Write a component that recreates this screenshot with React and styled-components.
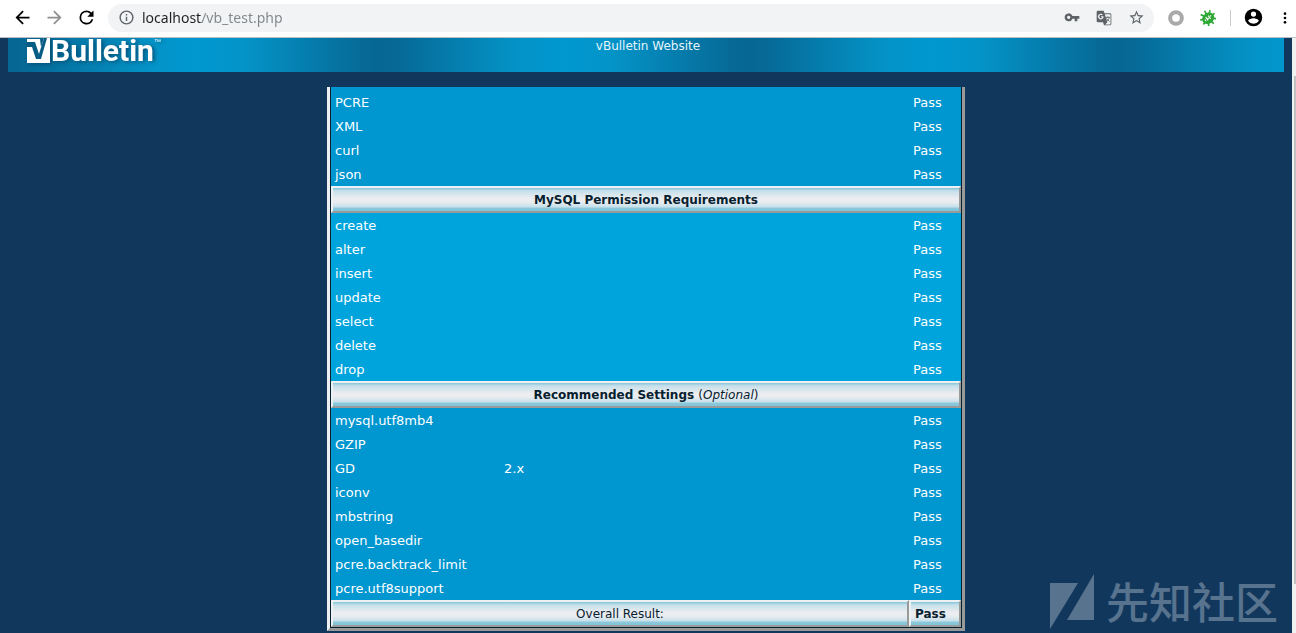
import React from "react";
import styled, { createGlobalStyle } from "styled-components";

const GlobalStyle = createGlobalStyle`
  *, *::before, *::after { box-sizing: border-box; }
  html, body { margin: 0; padding: 0; }
  body {
    background: #12375d;
    font-family: "DejaVu Sans", sans-serif;
    color: #fff;
  }
  button { font: inherit; color: inherit; }
`;

const Window = styled.div`
  min-height: 100vh;
  display: flex;
  flex-direction: column;
`;

const Toolbar = styled.header`
  height: 38px;
  flex: none;
  display: flex;
  align-items: center;
  padding: 0 3px 2px 6px;
  background: #fff;
  border-bottom: 1px solid #b9bfc4;
  color: #000;
`;

const IconButton = styled.button`
  width: 32px;
  height: 28px;
  flex: none;
  display: flex;
  align-items: center;
  justify-content: center;
  padding: 0;
  border: 0;
  background: none;
  color: ${(p) => p.$color || "#5f6368"};
`;

const MenuButton = styled(IconButton)`
  width: 16px;
  margin-left: 8px;
`;

const Omnibox = styled.form`
  flex: 1;
  min-width: 0;
  height: 28px;
  display: flex;
  align-items: center;
  margin: 0 6px;
  padding: 0 2px;
  border-radius: 14px;
  background: #f1f3f4;
`;

const UrlInput = styled.input`
  flex: 1;
  min-width: 0;
  height: 28px;
  padding: 0;
  border: 0;
  outline: 0;
  font: 14px/20px "Noto Sans", sans-serif;
  color: transparent;
  background: linear-gradient(90deg, #202124 60px, #80868b 60px);
  background-clip: text;
  -webkit-background-clip: text;
`;

const Divider = styled.span`
  width: 1px;
  height: 16px;
  margin: 0 6px;
  background: #c8cacc;
`;

const Viewport = styled.div`
  flex: 1;
  display: flex;
`;

const Page = styled.main`
  position: relative;
  flex: 1;
  min-width: 0;
  padding: 0 8px;
`;

const Banner = styled.div`
  height: 34px;
  display: grid;
  grid-template-columns: 1fr auto 1fr;
  padding: 0 12px 0 16px;
  overflow: hidden;
  background: repeating-linear-gradient(
    90deg,
    #066794 5px,
    #066996 20px,
    #0494c8 144px,
    #0098d0 189px,
    #0494c8 234px,
    #066996 358px,
    #066794 373px
  );
`;

const BannerLink = styled.a`
  color: #e6f5fb;
  font-size: 12px;
  line-height: 16px;
  text-decoration: none;
`;

const Logo = styled.a`
  display: flex;
  align-items: flex-end;
  height: 34px;
  padding: 0 0 9px 3px;
  color: #fff;
  text-decoration: none;
  filter: drop-shadow(2px 1px 2px #044d73);
`;

const LogoText = styled.span`
  margin-left: 1px;
  font: bold 30px/24px Roboto, sans-serif;
`;

const LogoMark = styled.sup`
  align-self: flex-start;
  font: 7px/8px "Liberation Sans", sans-serif;
`;

const Frame = styled.section`
  width: 50%;
  margin: 15px auto 0;
  padding: 3px 1px 1px;
  border: solid;
  border-width: 0 3px 3px;
  border-color: #999 #999 #999 #edeff1;
  background: #0096cf;
  box-shadow: inset 1px 0 #06202f, inset -1px -1px #06202f;
`;

const Results = styled.table`
  width: 100%;
  table-layout: fixed;
  border-collapse: separate;
  border-spacing: 0;
  font-size: 13px;
`;

const Group = styled.tbody`
  background: ${(p) => (p.$light ? "#00a4dc" : "#0096cf")};
`;

const Cell = styled.td`
  height: 24px;
  padding: 2px 4px 0;
  line-height: 22px;
`;

const BarCell = styled.th`
  height: 27px;
  padding: 2px 4px 0;
  border: 2px solid;
  border-color: #edf1f3 #999a9a #999a9a #edf1f3;
  background: linear-gradient(
    #83c4d9 0,
    #c4dfe9 12%,
    #ecedf0 45%,
    #eaedf0 60%,
    #c8e0ea 82%,
    #8bc8db 88%,
    #83c4d9 100%
  );
  color: #06202f;
  font-size: 12px;
  font-weight: ${(p) => (p.$plain ? 400 : 700)};
  line-height: 21px;
  text-align: ${(p) => p.$align || "center"};
`;

const Optional = styled.span`
  font-weight: 400;
`;

const ScrollTrack = styled.div`
  width: 4px;
  flex: none;
  padding: 38px 0 49px 2px;
  background: #f1f1f1;
`;

const ScrollThumb = styled.div`
  height: 100%;
  background: #c1c1c1;
`;

const Watermark = styled.div`
  position: absolute;
  right: 14px;
  bottom: 3px;
  display: flex;
  align-items: flex-end;
  gap: 11px;
  color: #58738e;
`;

const WatermarkText = styled.span`
  font: 500 43px/60px "Noto Sans CJK SC", sans-serif;
`;

const extensions = ["PCRE", "XML", "curl", "json"];
const permissions = ["create", "alter", "insert", "update", "select", "delete", "drop"];
const settings = [
  "mysql.utf8mb4",
  "GZIP",
  "GD",
  "iconv",
  "mbstring",
  "open_basedir",
  "pcre.backtrack_limit",
  "pcre.utf8support",
];

function Row({ name, value }) {
  return (
    <tr>
      <Cell>{name}</Cell>
      <Cell>{value}</Cell>
      <Cell>Pass</Cell>
    </tr>
  );
}

function Heading({ children }) {
  return (
    <tr>
      <BarCell colSpan={3}>{children}</BarCell>
    </tr>
  );
}

const Icon = ({ size = 18, children }) => (
  <svg width={size} height={size} viewBox="0 0 24 24" fill="currentColor" aria-hidden="true">
    {children}
  </svg>
);

const legs = [0, 40, 80, 120, 160, 200, 240, 280, 320];

function BrowserToolbar() {
  return (
    <Toolbar>
      <IconButton $color="#000" aria-label="Back">
        <Icon size={21}>
          <path d="M20 11H7.83l5.59-5.59L12 4l-8 8 8 8 1.41-1.41L7.83 13H20z" />
        </Icon>
      </IconButton>
      <IconButton $color="#8f8f8f" aria-label="Forward">
        <Icon size={21}>
          <path d="M12 4l-1.410 1.410L16.170 11H4v2h12.170l-5.580 5.590L12 20l8-8z" />
        </Icon>
      </IconButton>
      <IconButton $color="#000" aria-label="Reload">
        <Icon size={21}>
          <path d="M17.65 6.35A7.96 7.96 0 0 0 12 4a8 8 0 1 0 7.73 10h-2.08A6 6 0 1 1 12 6c1.66 0 3.14.69 4.22 1.78L13 11h7V4z" />
        </Icon>
      </IconButton>
      <Omnibox>
        <IconButton type="button" aria-label="Site information">
          <Icon size={17}>
            <path d="M11 17h2v-6h-2zM12 2a10 10 0 1 0 0 20 10 10 0 0 0 0-20zm0 18a8 8 0 1 1 0-16 8 8 0 0 1 0 16zM11 9h2V7h-2z" />
          </Icon>
        </IconButton>
        <UrlInput aria-label="Address" defaultValue="localhost/vb_test.php" spellCheck={false} />
        <IconButton type="button" aria-label="Passwords">
          <Icon size={16}>
            <path d="M12.65 9A6 6 0 0 0 1 11a6 6 0 0 0 11.65 2H16v4h4v-4h3V9zM7 13.500a2.500 2.500 0 1 1 0-5 2.500 2.500 0 0 1 0 5z" />
          </Icon>
        </IconButton>
        <IconButton type="button" aria-label="Translate">
          <Icon size={16}>
            <path d="M3 1h8.500l1.300 4H21a2 2 0 0 1 2 2v14a2 2 0 0 1-2 2h-9l-1.500-4.500H3a2 2 0 0 1-2-2V3a2 2 0 0 1 2-2zm10.300 5.200L17 18.500l-3.200 3.300H21a.8.8 0 0 0 .8-.8V7a.8.8 0 0 0-.8-.8z" fillRule="evenodd" />
            <path d="M11.300 9.200H7.600v1.700h1.900a2.400 2.400 0 1 1-.6-2.900l1.300-1.300a4.300 4.300 0 1 0 1.200 3.800z" fill="#f1f3f4" />
            <path d="M14.500 11h6.500M17.700 9.500V11M20 11c-.8 3-2.500 5-4.500 6M15.800 12.500c1 2 2.500 3.500 4.500 4.700" fill="none" stroke="currentColor" strokeWidth="1.300" />
          </Icon>
        </IconButton>
        <IconButton type="button" aria-label="Bookmark">
          <Icon size={17}>
            <path d="M22 9.240l-7.190-.62L12 2 9.190 8.630 2 9.240l5.460 4.730L5.820 21 12 17.270 18.180 21l-1.630-7.030zM12 15.400l-3.760 2.270 1-4.280-3.320-2.880 4.380-.38L12 6.100l1.710 4.040 4.380.38-3.320 2.880 1 4.280z" />
          </Icon>
        </IconButton>
      </Omnibox>
      <IconButton $color="#a9a9a9" aria-label="Extension">
        <Icon size={16}>
          <circle cx="12" cy="12" r="8.800" fill="#fff" stroke="currentColor" strokeWidth="6" />
        </Icon>
      </IconButton>
      <IconButton $color="#2fa836" aria-label="Debugger">
        <Icon size={16}>
          <ellipse cx="12" cy="12.500" rx="9.500" ry="8" transform="rotate(-35 12 12)" />
          {legs.map((angle) => (
            <rect key={angle} x="10.700" y="0" width="2.600" height="6" transform={`rotate(${angle + 15} 12 12)`} />
          ))}
          <path d="M8.500 10.500l3.500 5M12.500 8.500l3.500 5M7.500 14.500l1.500 2M11.500 12l1.500 1.500M15.500 8l1 1.500" stroke="#fff" strokeWidth="1.700" />
        </Icon>
      </IconButton>
      <Divider />
      <IconButton $color="#000" aria-label="Profile">
        <Icon size={21}>
          <path d="M12 2a10 10 0 1 0 0 20 10 10 0 0 0 0-20zm0 3a3 3 0 1 1 0 6 3 3 0 0 1 0-6zm0 14.200a7.200 7.200 0 0 1-6-3.220c.03-1.990 4-3.080 6-3.080s5.970 1.090 6 3.080a7.200 7.200 0 0 1-6 3.220z" />
        </Icon>
      </IconButton>
      <MenuButton $color="#000" aria-label="Menu">
        <Icon size={20}>
          <circle cx="12" cy="5.500" r="2" />
          <circle cx="12" cy="12" r="2" />
          <circle cx="12" cy="18.500" r="2" />
        </Icon>
      </MenuButton>
    </Toolbar>
  );
}

export default function App() {
  return (
    <Window>
      <GlobalStyle />
      <BrowserToolbar />
      <Viewport>
        <Page>
          <Banner>
            <Logo href="#">
              <svg width="23" height="25" viewBox="0 0 23 25" aria-hidden="true">
                <path d="M0 1h13l1 8 3-9h6v25H0z" fill="#fff" />
                <path d="M0 4h8l4 12L17 0h3l-6 21H9L5 9H0z" fill="#075c86" />
              </svg>
              <LogoText>Bulletin</LogoText>
              <LogoMark>™</LogoMark>
            </Logo>
            <BannerLink href="#">vBulletin Website</BannerLink>
          </Banner>
          <Frame>
            <Results>
              <colgroup>
                <col width="169" />
                <col />
                <col width="52" />
              </colgroup>
              <Group>
                {extensions.map((name) => (
                  <Row key={name} name={name} />
                ))}
                <Heading>MySQL Permission Requirements</Heading>
              </Group>
              <Group $light>
                {permissions.map((name) => (
                  <Row key={name} name={name} />
                ))}
              </Group>
              <Group>
                <Heading>
                  Recommended Settings{" "}
                  <Optional>
                    (<em>Optional</em>)
                  </Optional>
                </Heading>
                {settings.map((name) => (
                  <Row key={name} name={name} value={name === "GD" ? "2.x" : null} />
                ))}
              </Group>
              <tfoot>
                <tr>
                  <BarCell colSpan={2} $plain>
                    Overall Result:
                  </BarCell>
                  <BarCell $align="left">Pass</BarCell>
                </tr>
              </tfoot>
            </Results>
          </Frame>
          <Watermark>
            <svg width="45" height="56" viewBox="0 0 45 56" fill="currentColor" aria-hidden="true">
              <path d="M0 9h28L0 55zM44 0v46H17z" />
            </svg>
            <WatermarkText>先知社区</WatermarkText>
          </Watermark>
        </Page>
        <ScrollTrack>
          <ScrollThumb />
        </ScrollTrack>
      </Viewport>
    </Window>
  );
}
